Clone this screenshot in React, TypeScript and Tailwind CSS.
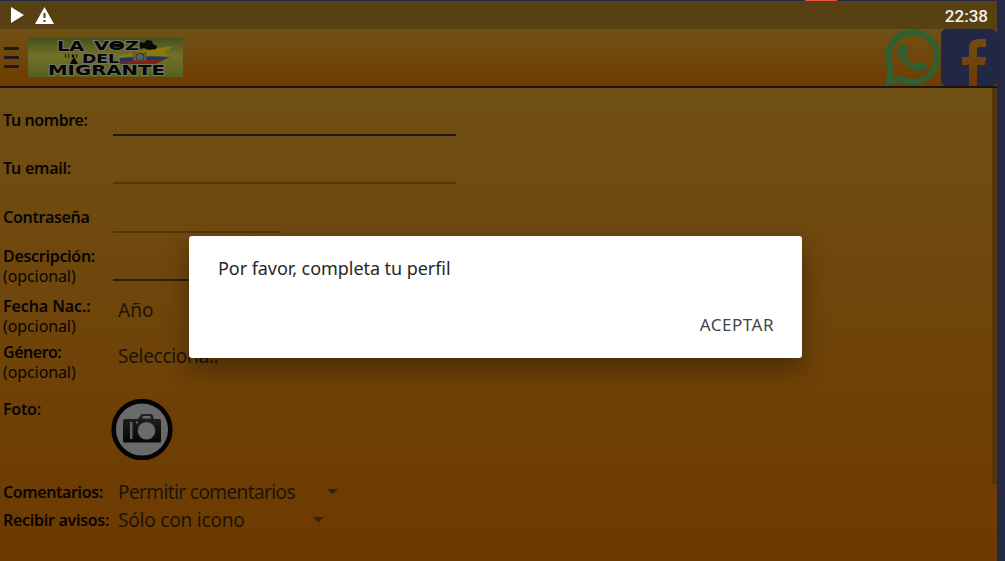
import type { ReactNode } from "react";

function Label({ children, tracking, optional }: { children: ReactNode; tracking: string; optional?: boolean }) {
  return (
    <div className="w-[113px] shrink-0 pl-[3px] text-[16px] leading-[20px] whitespace-nowrap text-[#080603]">
      <div className={`font-semibold ${tracking}`}>{children}</div>
      {optional && <div className="tracking-[-0.1px]">(opcional)</div>}
    </div>
  );
}

function WhatsApp() {
  return (
    <svg className="h-[57px] w-[56px]" viewBox="0 0 56 57">
      <path d="M3.3 53.2 L6.3 40.5 A24.8 24.8 0 1 1 15.5 49.6 Z" fill="none" stroke="#335e30" strokeWidth="6.2" />
      <path d="M0 57L1 51L7 49L18 47L17 53Z" fill="#335e30" />
      <path d="M16 15 C18 14 20 14.6 21 17 L23 22 C23.4 24 21 25 20.5 27 C23 32 26 34 30.5 35.8 C32.5 35 33.5 32 36 33 L41.5 35.5 C43.5 38 39 42.5 35 42.3 C24 41.5 13 31 13 22 C13 18.5 14 16 16 15Z" fill="#335e30" />
    </svg>
  );
}

function Facebook() {
  return (
    <svg className="h-[57px] w-[56px]" viewBox="0 0 56 57">
      <path fillRule="evenodd" d="M6 0H50Q56 0 56 6V51Q56 57 50 57H36V36H44L45 28H36V21Q36 18 39 18H45V10H38Q28 10 28 20V28H21V36H28V57H6Q0 57 0 51V6Q0 0 6 0Z" fill="#212744" />
    </svg>
  );
}

function Logo() {
  return (
    <svg className="h-[39px] w-[155px]" viewBox="0 0 155 39">
      <defs>
        <linearGradient id="field" x2="0" y2="1">
          <stop stopColor="#43501c" />
          <stop offset="0.45" stopColor="#74702a" />
          <stop offset="1" stopColor="#56601f" />
        </linearGradient>
      </defs>
      <rect width="155" height="39" fill="url(#field)" />
      <path d="M91 18 Q116 12 145 8 L136 15 L142 19 L91 21Z" fill="#897b08" />
      <path d="M92 20 Q116 17 142 19 L130 24 L91 24Z" fill="#14376f" />
      <path d="M91 24 Q116 21 136 22 L127 26 L91 26Z" fill="#80221b" />
      <path d="M104 13 Q112 17 119 13 L118 22 Q112 25 105 22Z" fill="#6d592a" />
      <ellipse cx="112" cy="19" rx="4" ry="4" fill="#526169" stroke="#472e14" />
      <path d="M42 26L44 22L46 19L50 26Z" fill="#050604" />
      <circle cx="45" cy="18" r="1.4" fill="#050604" />
      <path d="M41 16Q39 18 41 20M48 16Q50 18 48 20M38 16Q36 18 38 20" fill="none" stroke="#11140b" strokeWidth="1" />
      <g fill="#050604" stroke="#74745f" strokeWidth="1.8" paintOrder="stroke" className="font-['DejaVu_Sans'] font-bold">
        <text x="29" y="13" fontSize="13.5" textLength="27" lengthAdjust="spacingAndGlyphs">LA</text>
        <text x="66" y="12" fontSize="12.5" textLength="45" lengthAdjust="spacingAndGlyphs">VOZ</text>
        <text x="54" y="24.6" fontSize="13" textLength="37" lengthAdjust="spacingAndGlyphs">DEL</text>
        <text x="20" y="36.7" fontSize="14" textLength="117" lengthAdjust="spacingAndGlyphs">MIGRANTE</text>
      </g>
      <path d="M112 4L116 5L119 2L124 3L125 6L129 8L128 11L121 12L116 10L112 11Z" fill="#080b05" />
      <ellipse cx="89" cy="7.5" rx="4" ry="2" fill="#080b05" />
    </svg>
  );
}

function Caret() {
  return <svg className="h-[6px] w-[11px]" viewBox="0 0 11 6"><path d="M0 0H11L5.5 5.5Z" fill="#35230b" /></svg>;
}

function Camera() {
  return (
    <svg className="h-[62px] w-[62px]" viewBox="0 0 62 62">
      <defs>
        <linearGradient id="body" x2="0" y2="1"><stop stopColor="#222" /><stop offset="1" stopColor="#050505" /></linearGradient>
      </defs>
      <circle cx="31" cy="30.5" r="28.3" fill="#6a6a6a" stroke="#030303" strokeWidth="4.6" />
      <path fillRule="evenodd" d="M14 20H27L30 15.5Q30.5 15 31.5 15H40Q41 15 41.5 16L43 20H48.5Q50 20 50 21.5V42Q50 43.5 48.5 43.5H13.5Q12 43.5 12 42V22Q12 20 14 20ZM32 17L31 19.5H40L39 17Z" fill="url(#body)" />
      <path d="M19 23H21.5V40H19ZM25 22.5H27V24.5H25Z" fill="#626262" />
      <circle cx="35.5" cy="31.7" r="8.8" fill="#6a6a6a" />
    </svg>
  );
}

export default function App() {
  return (
    <div className="relative flex h-[561px] w-[1005px] flex-col overflow-hidden bg-[#232846] font-['Noto_Sans',sans-serif]">
      <div className="h-px shrink-0 pl-[805px]"><div className="h-px w-8 bg-[#e9543f]" /></div>
      <div className="flex h-7 w-[997px] shrink-0 items-center bg-[#574012] pr-[9px] pl-[11px]">
        <svg className="h-4 w-[13px]" viewBox="0 0 13 16"><path d="M0 0L13 8L0 16Z" fill="#fff" /></svg>
        <svg className="ml-[11px] h-[17px] w-[19px]" viewBox="0 0 19 17">
          <path d="M9.5 0L19 17H0Z" fill="#fff" /><path d="M8.5 6H10.5V11H8.5ZM8.5 13H10.5V15H8.5Z" fill="#574012" />
        </svg>
        <span className="ml-auto pt-px font-['Roboto'] text-[17px] leading-5 font-medium text-[#f5f2ed]">22:38</span>
      </div>
      <header className="flex h-[57px] w-[997px] shrink-0 bg-linear-to-b from-[#705115] to-[#703b00]">
        <div className="flex w-7 shrink-0 flex-col gap-[6px] pt-[18px] pl-1">
          <i className="h-[3px] w-[15px] bg-[#1e1b18]" />
          <i className="h-[3px] w-[15px] bg-[#1e1b18]" />
          <i className="h-[3px] w-[15px] bg-[#1e1b18]" />
        </div>
        <div className="pt-[9px]"><Logo /></div>
        <div className="ml-auto flex"><WhatsApp /><Facebook /></div>
      </header>
      <div className="h-[2px] w-[997px] shrink-0 bg-[#18150f]" />
      <div className="flex min-h-0 w-[997px] grow bg-linear-to-b from-[#705014] to-[#6e3900]">
        <main className="flex w-[992px] flex-col text-[19px] leading-7 text-[#1c1408]">
          <div className="flex h-[49px] pt-[22px]">
            <Label tracking="tracking-[-0.4px]">Tu nombre:</Label>
            <div className="mt-[24px] h-[2px] w-[343px] bg-[#1b1a15]" />
          </div>
          <div className="flex h-[49px] pt-[21px]">
            <Label tracking="tracking-[-0.25px]">Tu email:</Label>
            <div className="mt-[24px] h-[2px] w-[343px] bg-[#53340c]" />
          </div>
          <div className="flex h-[49px] pt-[21px]">
            <Label tracking="tracking-[-0.3px]">Contraseña</Label>
            <div className="mt-[24px] h-[2px] w-[167px] bg-[#53340c]" />
          </div>
          <div className="flex h-[50px] pt-[11px]">
            <Label tracking="tracking-[-0.3px]" optional>Descripción:</Label>
            <div className="mt-[33px] h-[2px] w-[343px] bg-[#2b1e0b]" />
          </div>
          <div className="flex h-[46px] pt-[11px]">
            <Label tracking="tracking-[-0.1px]" optional>Fecha Nac.:</Label>
            <span className="pl-[5px]">Año</span>
          </div>
          <div className="flex h-[57px] pt-[11px]">
            <Label tracking="tracking-[-0.45px]" optional>Género:</Label>
            <span className="pl-[5px] tracking-[-0.3px]">Selecciona..</span>
            <div className="mt-[10px] ml-[33px]"><Caret /></div>
          </div>
          <div className="flex h-[90px] pt-[11px]">
            <Label tracking="tracking-[-0.3px]">Foto:</Label>
            <div className="-ml-[2px]"><Camera /></div>
          </div>
          <div className="flex h-7 items-center">
            <Label tracking="tracking-[-0.4px]">Comentarios:</Label>
            <div className="flex w-[225px] items-center justify-between pl-[5px]"><span className="tracking-[-0.6px]">Permitir comentarios</span><Caret /></div>
          </div>
          <div className="flex h-7 items-center">
            <Label tracking="tracking-[-0.3px]">Recibir avisos:</Label>
            <div className="flex w-[211px] items-center justify-between pl-[5px]"><span className="tracking-[-0.2px]">Sólo con icono</span><Caret /></div>
          </div>
        </main>
        <div className="h-[396px] w-[5px] bg-[#543507]" />
      </div>
      <div role="dialog" className="absolute top-[236px] left-[189px] flex h-[122px] w-[613px] flex-col justify-between rounded-[3px] bg-white pt-[18px] pr-7 pb-[21px] pl-[29px] shadow-[0_10px_24px_2px_rgba(0,0,0,0.32)]">
        <p className="text-[18px] leading-7 tracking-[-0.06px] text-[#272727]">Por favor, completa tu perfil</p>
        <button className="self-end text-[17px] leading-6 tracking-[0.5px] text-[#444]">ACEPTAR</button>
      </div>
    </div>
  );
}
